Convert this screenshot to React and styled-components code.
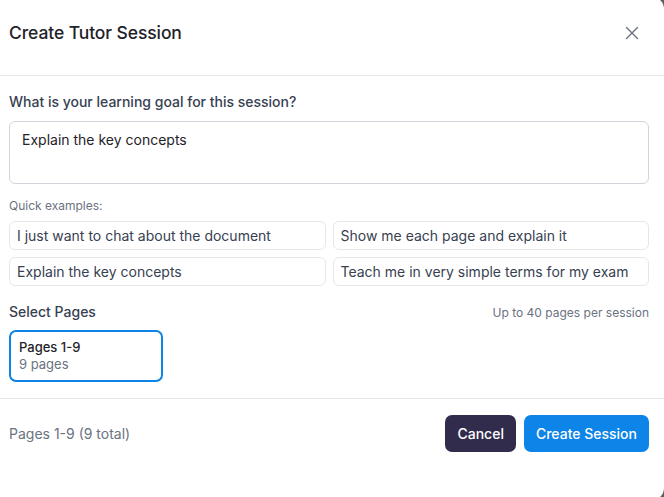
import React, { useState } from 'react';
import styled, { createGlobalStyle } from 'styled-components';

const GlobalStyle = createGlobalStyle`
  html, body {
    margin: 0;
    padding: 0;
    background: #5f5f62;
    overflow: hidden;
  }
  body {
    font-family: Inter, "Noto Sans", sans-serif;
    -webkit-font-smoothing: antialiased;
  }
`;

const Dialog = styled.div`
  width: 664px;
  height: 503px;
  margin-top: -3px;
  background: #ffffff;
  border-radius: 0 12px 12px 0;
  display: flex;
  flex-direction: column;
  box-sizing: border-box;
`;

const Header = styled.header`
  height: 79px;
  padding: 0 20px 7px 9px;
  box-sizing: border-box;
  display: flex;
  align-items: center;
  justify-content: space-between;
  border-bottom: 1px solid #e5e7eb;
`;

const Title = styled.h2`
  margin: 0;
  font-size: 17.5px;
  font-weight: 500;
  color: #1f2328;
  letter-spacing: -0.1px;
`;

const CloseButton = styled.button`
  all: unset;
  width: 24px;
  height: 24px;
  display: flex;
  align-items: center;
  justify-content: center;
  color: #6b7280;
  cursor: pointer;
`;

const Body = styled.div`
  padding: 16px 15px 16px 9px;
  display: flex;
  flex-direction: column;
`;

const Label = styled.label`
  font-size: 14px;
  line-height: 20px;
  font-weight: 450;
  color: #374151;
  margin-bottom: 9px;
`;

const GoalInput = styled.textarea`
  width: 100%;
  height: 63px;
  box-sizing: border-box;
  border: 1px solid #d1d5db;
  border-radius: 6px;
  padding: 8px 12px;
  resize: none;
  font-family: inherit;
  font-size: 14px;
  line-height: 20px;
  color: #1f2328;
  outline: none;
`;

const Hint = styled.div`
  font-size: 12px;
  line-height: 16px;
  color: #6b7280;
  margin: ${({ $mt }) => $mt || 0}px 0 7px;
`;

const ExampleGrid = styled.div`
  display: grid;
  grid-template-columns: 1fr 1fr;
  gap: 7px 7px;
`;

const ExampleButton = styled.button`
  height: 29px;
  box-sizing: border-box;
  border: 1px solid #e5e7eb;
  border-radius: 6px;
  background: #ffffff;
  padding: 0 7px;
  text-align: left;
  font-family: inherit;
  font-size: 14px;
  color: #374151;
  cursor: pointer;
`;

const SectionRow = styled.div`
  display: flex;
  align-items: center;
  justify-content: space-between;
  margin-top: 16px;
  margin-bottom: 8px;
`;

const SectionTitle = styled.span`
  font-size: 14px;
  line-height: 20px;
  font-weight: 450;
  color: #374151;
`;

const SideNote = styled.span`
  font-size: 12px;
  color: #6b7280;
`;

const PageCard = styled.button`
  width: 154px;
  height: 52px;
  box-sizing: border-box;
  border: 2px solid ${({ $active }) => ($active ? '#0c84e8' : '#e5e7eb')};
  border-radius: 7px;
  background: #ffffff;
  padding: 0 8px;
  text-align: left;
  font-family: inherit;
  display: flex;
  flex-direction: column;
  justify-content: center;
  cursor: pointer;
`;

const CardTitle = styled.span`
  font-size: 13px;
  line-height: 17px;
  font-weight: 500;
  color: #1f2328;
`;

const CardSub = styled.span`
  font-size: 13px;
  line-height: 17px;
  color: #6b7280;
`;

const Footer = styled.footer`
  border-top: 1px solid #e5e7eb;
  padding: 16px 15px 0 9px;
  display: flex;
  align-items: center;
  justify-content: space-between;
`;

const Summary = styled.span`
  font-size: 14px;
  color: #6b7280;
`;

const Actions = styled.div`
  display: flex;
  gap: 8px;
`;

const ActionButton = styled.button`
  height: 37px;
  border: none;
  border-radius: 7px;
  padding: 0 12px;
  font-family: inherit;
  font-size: 14px;
  font-weight: 500;
  color: #ffffff;
  background: ${({ $primary }) => ($primary ? '#0c84e8' : '#322c4c')};
  cursor: pointer;
`;

const examples = [
  'I just want to chat about the document',
  'Show me each page and explain it',
  'Explain the key concepts',
  'Teach me in very simple terms for my exam',
];

export default function App() {
  const [goal, setGoal] = useState('Explain the key concepts');

  return (
    <>
      <GlobalStyle />
      <Dialog>
        <Header>
          <Title>Create Tutor Session</Title>
          <CloseButton aria-label="Close">
            <svg width="14" height="14" viewBox="0 0 14 14" fill="none">
              <path d="M1.5 1.5l11 11M12.5 1.5l-11 11" stroke="currentColor" strokeWidth="1.4" strokeLinecap="round" />
            </svg>
          </CloseButton>
        </Header>
        <Body>
          <Label>What is your learning goal for this session?</Label>
          <GoalInput value={goal} onChange={(e) => setGoal(e.target.value)} />
          <Hint $mt={14}>Quick examples:</Hint>
          <ExampleGrid>
            {examples.map((ex) => (
              <ExampleButton key={ex} onClick={() => setGoal(ex)}>
                {ex}
              </ExampleButton>
            ))}
          </ExampleGrid>
          <SectionRow>
            <SectionTitle>Select Pages</SectionTitle>
            <SideNote>Up to 40 pages per session</SideNote>
          </SectionRow>
          <PageCard $active>
            <CardTitle>Pages 1-9</CardTitle>
            <CardSub>9 pages</CardSub>
          </PageCard>
        </Body>
        <Footer>
          <Summary>Pages 1-9 (9 total)</Summary>
          <Actions>
            <ActionButton>Cancel</ActionButton>
            <ActionButton $primary>Create Session</ActionButton>
          </Actions>
        </Footer>
      </Dialog>
    </>
  );
}
